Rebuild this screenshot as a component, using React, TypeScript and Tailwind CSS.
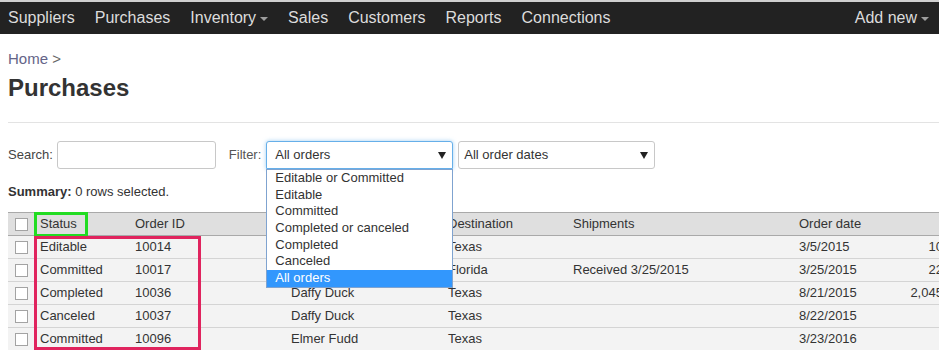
import React from "react";

const navItems = [
  { label: "Suppliers" },
  { label: "Purchases" },
  { label: "Inventory", caret: true },
  { label: "Sales" },
  { label: "Customers" },
  { label: "Reports" },
  { label: "Connections" },
];

const filterOptions = [
  "Editable or Committed",
  "Editable",
  "Committed",
  "Completed or canceled",
  "Completed",
  "Canceled",
  "All orders",
];

const orders = [
  { status: "Editable", id: "10014", supplier: "Bugs Bunny", dest: "Texas", ship: "", date: "3/5/2015", amount: "10.50" },
  { status: "Committed", id: "10017", supplier: "Porky Pig", dest: "Florida", ship: "Received 3/25/2015", date: "3/25/2015", amount: "22.00" },
  { status: "Completed", id: "10036", supplier: "Daffy Duck", dest: "Texas", ship: "", date: "8/21/2015", amount: "2,045.00" },
  { status: "Canceled", id: "10037", supplier: "Daffy Duck", dest: "Texas", ship: "", date: "8/22/2015", amount: "" },
  { status: "Committed", id: "10096", supplier: "Elmer Fudd", dest: "Texas", ship: "", date: "3/23/2016", amount: "" },
];

const cols = "grid grid-cols-[26px_95px_156px_157px_125px_226px_100px_77px]";

function Caret() {
  return <span className="ml-[4px] mt-[2px] inline-block w-0 h-0 border-x-4 border-t-4 border-x-transparent border-t-[#9d9d9d]" />;
}

function Arrow() {
  return (
    <svg width="8" height="7" viewBox="0 0 8 7" className="shrink-0">
      <path d="M0 0h8L4 7z" fill="#222" />
    </svg>
  );
}

function Checkbox() {
  return <span className="block w-[13px] h-[13px] border border-[#a3a3a3] bg-white" />;
}

export default function App() {
  return (
    <div className="w-full h-[350px] overflow-hidden bg-white text-[#333] font-['Liberation_Sans',Arial,sans-serif]">
      {/* Top nav */}
      <nav className="h-[34px] border-t-2 border-[#cfcfcf] bg-[#222] flex items-center justify-between pl-2 pr-[10px] text-[16px] text-[#dcdcdc]">
        <div className="flex items-center gap-5">
          {navItems.map((item) => (
            <span key={item.label} className="flex items-center">
              {item.label}
              {item.caret && <Caret />}
            </span>
          ))}
        </div>
        <span className="flex items-center">
          Add new
          <Caret />
        </span>
      </nav>

      <div className="pl-2">
        {/* Breadcrumb + title */}
        <div className="mt-[15px] h-5 leading-5 text-[15px] text-[#646488]">
          Home <span className="text-[#666]">&gt;</span>
        </div>
        <h1 className="mt-[5px] h-7 leading-7 text-[24px] font-bold text-[#333]">Purchases</h1>
        <div className="mt-5 border-t border-[#e3e3e3]" />

        {/* Search / filters */}
        <div className="mt-[18px] h-[28px] flex items-center text-[13px]">
          <span className="text-[#444]">Search:</span>
          <div className="ml-[4px] w-[159px] h-[28px] rounded-[3px] border border-[#c8c8c8] bg-white" />
          <span className="ml-[13px] text-[#555]">Filter:</span>
          <div className="relative ml-[5px] w-[187px] h-[28px]">
            <div className="h-full flex items-center justify-between pl-[8px] pr-[6px] rounded-t-[3px] border border-[#66afe9] shadow-[0_0_4px_rgba(102,175,233,0.6)] bg-white">
              <span>All orders</span>
              <Arrow />
            </div>
            {/* Open dropdown list */}
            <ul className="absolute left-0 top-full z-10 w-full border border-[#7fa3d0] bg-white">
              {filterOptions.map((opt, i) => (
                <li
                  key={opt}
                  className={
                    i === filterOptions.length - 1
                      ? "h-[16.7px] leading-[16.7px] pl-[8px] bg-[#3297fd] text-white"
                      : "h-[16.7px] leading-[16.7px] pl-[8px] text-[#333]"
                  }
                >
                  {opt}
                </li>
              ))}
            </ul>
          </div>
          <div className="ml-[5px] w-[197px] h-[28px] flex items-center justify-between pl-[5px] pr-[6px] rounded-[3px] border border-[#c8c8c8] bg-white">
            <span>All order dates</span>
            <Arrow />
          </div>
        </div>

        {/* Summary */}
        <div className="mt-[15px] h-4 leading-4 text-[13px] text-[#333]">
          <span className="font-bold">Summary:</span> 0 rows selected.
        </div>

        {/* Table */}
        <div className="relative mt-3 w-max text-[13px]">
          <div className={`${cols} h-6 items-center border-y border-[#a9a9a9] bg-[#dfdfdf]`}>
            <span className="pl-[7px]"><Checkbox /></span>
            <span className="pl-[6px]">Status</span>
            <span className="pl-[6px]">Order ID</span>
            <span className="pl-[6px]">Supplier</span>
            <span className="pl-[6px]">Destination</span>
            <span className="pl-[6px]">Shipments</span>
            <span className="pl-[6px]">Order date</span>
            <span />
          </div>
          {orders.map((o) => (
            <div key={o.id} className={`${cols} h-[23px] items-center border-b border-[#d4d4d4] bg-[#f3f3f3]`}>
              <span className="pl-[7px]"><Checkbox /></span>
              <span className="pl-[6px]">{o.status}</span>
              <span className="pl-[6px]">{o.id}</span>
              <span className="pl-[6px]">{o.supplier}</span>
              <span className="pl-[6px]">{o.dest}</span>
              <span className="pl-[6px]">{o.ship}</span>
              <span className="pl-[6px]">{o.date}</span>
              <span className="pr-[9px] text-right">{o.amount}</span>
            </div>
          ))}

          {/* Annotation boxes */}
          <div className="absolute left-[26px] top-0 w-[54px] h-[25px] border-[3px] border-[#22dc22]" />
          <div className="absolute left-[26px] top-[24px] w-[167px] h-[114px] border-[3px] border-[#e0245e]" />
        </div>
      </div>
    </div>
  );
}
